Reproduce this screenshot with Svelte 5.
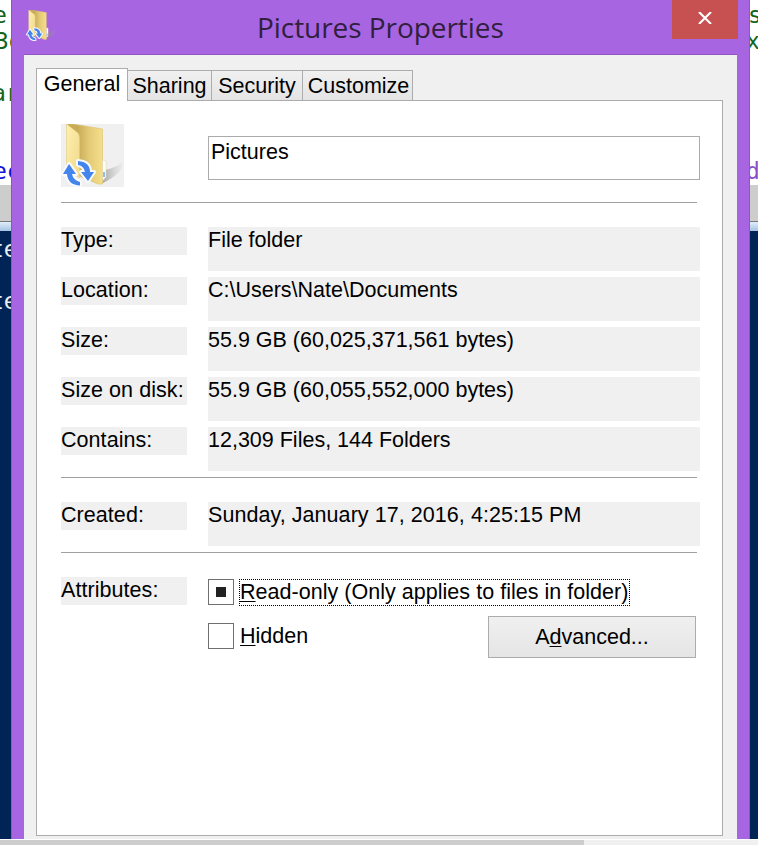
<script>
  const tabs = ['General', 'Sharing', 'Security', 'Customize'];
  const details = [
    ['Type:', 'File folder'],
    ['Location:', 'C:\\Users\\Nate\\Documents'],
    ['Size:', '55.9 GB (60,025,371,561 bytes)'],
    ['Size on disk:', '55.9 GB (60,055,552,000 bytes)'],
    ['Contains:', '12,309 Files, 144 Folders']
  ];
  const leftCode = [
    { text: 'e', shift: -7 }, { text: '3e', shift: -5 }, { text: '' },
    { text: 'ar', shift: -8 }, { text: '' }, { text: '' },
    { text: 'ec', shift: -7, tone: 'blue' }
  ];
  const rightCode = [
    { text: 's', shift: -2 }, { text: 'x', shift: -4 }, { text: '' }, { text: '' },
    { text: '' }, { text: '' }, { text: 'd', shift: -4, tone: 'violet' }
  ];
</script>

{#snippet folder(size)}
  <svg width={size} height={size} viewBox="0 0 63 63" aria-hidden="true">
    <defs>
      <linearGradient id="front" x1="0" y1="0" x2="1" y2="1">
        <stop offset="0" stop-color="#fff0ae" /><stop offset="1" stop-color="#f0d98a" />
      </linearGradient>
      <linearGradient id="back" x1="0" y1="0" x2="1" y2="0">
        <stop offset=".3" stop-color="#c8ab56" /><stop offset=".62" stop-color="#e4ca76" /><stop offset="1" stop-color="#f5df8b" />
      </linearGradient>
      <linearGradient id="shade" x1="0" y1="0" x2="1" y2="0">
        <stop offset="0" stop-color="#777" stop-opacity=".65" /><stop offset="1" stop-color="#aaa" stop-opacity=".05" />
      </linearGradient>
    </defs>
    <path d="M40 60 L44 46 Q54 44 62 38 L60 46 Q53 54 40 60Z" fill="url(#shade)" />
    <path d="M6 0 H12 L41.5 5 V60 L37 60 L18 52 V12Z" fill="url(#back)" stroke="#dbc06b" stroke-width=".6" />
    <path d="M41.5 36 L45 37 V53 L41.5 57Z" fill="#fff" stroke="#e3ce8d" stroke-width=".5" />
    <path d="M43 48 V53" stroke="#68a7ee" stroke-width="1.5" />
    <path d="M5.5 0 L17 9 Q18.5 11 18.5 14 V54 L5.5 45Z" fill="url(#front)" stroke="#e2cb7e" stroke-width=".6" />
    <g fill="#4385ed" stroke="#f8faff" stroke-width="4" stroke-linejoin="round" paint-order="stroke">
      <path d="M2 50 L8 40 L15 50 H11 Q12 56 19 58 L19 61.5 Q7 61 6 50Z" />
      <path d="M17 37 Q29 38 29 48 H33 L27 57 L20 48 H24 Q23 42 17 41Z" />
    </g>
  </svg>
{/snippet}

{#snippet code(lines)}
  {#each lines as line}
    <div class="line {line.tone ?? ''}" style:margin-left="{line.shift ?? 0}px">{line.text}</div>
  {/each}
{/snippet}

<div class="screen">
  <div class="backdrop">
    <div class="editor">
      <div class="edge left">{@render code(leftCode)}</div>
      <div class="edge right">{@render code(rightCode)}</div>
    </div>
    <div class="scroll"></div>
    <div class="splitter"></div>
    <div class="console"><div>te</div><div></div><div>te</div></div>
    <div class="bottom"><div class="thumb"></div></div>
  </div>

  <div class="window">
    <header>
      <div class="small-icon">{@render folder(31)}</div>
      <h1>Pictures Properties</h1>
      <button class="close" aria-label="Close">
        <svg width="14" height="12" viewBox="0 0 14 12"><path d="M1 0 L13 12 M13 0 L1 12" stroke="#fff" stroke-width="2.1" /></svg>
      </button>
    </header>
    <div class="client">
      <nav>
        {#each tabs as tab, i}
          <div class="tab t{i}" class:active={i === 0}>{tab}</div>
        {/each}
      </nav>
      <main>
        <div class="identity">
          <div class="picture">{@render folder(63)}</div>
          <div class="name">Pictures</div>
        </div>
        <hr />
        <div class="details">
          {#each details as [label, value]}
            <div class="row"><div class="label">{label}</div><div class="value">{value}</div></div>
          {/each}
        </div>
        <hr class="second" />
        <div class="row created"><div class="label">Created:</div><div class="value date">Sunday, January 17, 2016, 4:25:15 PM</div></div>
        <hr class="third" />
        <div class="attributes">
          <div class="label">Attributes:</div>
          <div class="options">
            <div class="check"><span class="box"><span class="mark"></span></span><span class="caption focus"><u>R</u>ead-only (Only applies to files in folder)</span></div>
            <div class="second-line">
              <div class="check"><span class="box"></span><span class="caption"><u>H</u>idden</span></div>
              <button class="advanced">A<u>d</u>vanced...</button>
            </div>
          </div>
        </div>
      </main>
    </div>
  </div>
</div>

<style>
  :global(body) { margin: 0; }
  .screen, .screen * { box-sizing: border-box; }
  .screen { position: relative; width: 758px; height: 845px; overflow: hidden; color: #000; font: 21.5px/26px "Liberation Sans", Arial, sans-serif; white-space: nowrap; }
  .backdrop { display: flex; flex-direction: column; height: 845px; }
  .editor { display: flex; justify-content: space-between; height: 185px; background: #fff; }
  .edge { height: 185px; padding-top: 2px; font: 23px/26px "DejaVu Sans Mono", monospace; color: #116619; }
  .left { width: 11px; }
  .right { width: 8px; }
  .line { height: 26px; }
  .blue { color: #1414e0; }
  .violet { color: #8a4fc8; }
  .scroll { height: 36px; background: #cdcdcd; }
  .splitter { height: 10px; border-top: 1px solid #777; background: linear-gradient(#dfeefb, #a5c3e3); }
  .console { flex: 1; padding-top: 5px; background: #012456; color: #eee; font: 23px/26px "DejaVu Sans Mono", monospace; }
  .console div { height: 26px; margin-left: -10px; }
  .bottom { height: 6px; border-top: 1px solid #fff; background: #f0f0f0; }
  .thumb { width: 584px; height: 5px; background: #cdcdcd; }
  .window { position: absolute; left: 11px; top: 0; width: 739px; height: 839px; padding: 0 11px 0 12px; background: #a865e2; border: solid #8f55c3; border-width: 0 1px; overflow: hidden; }
  header { display: flex; height: 54px; }
  .small-icon { width: 120px; padding: 10px 0 0 2px; }
  .small-icon svg { display: block; }
  h1 { flex: 1; margin: 0 0 0 8px; padding: 7px 0 0 105px; font: 28px/40px "Open Sans", "Noto Sans", sans-serif; letter-spacing: -.06px; color: #30203e; }
  .close { display: grid; place-items: center; width: 66px; height: 39px; padding: 0 0 4px; border: 0; background: #c75050; }
  .client { width: 713px; height: 785px; padding: 13px 14px 0 12px; background: #f0f0f0; border-top: 1px solid #8f55c3; }
  nav { position: relative; display: flex; align-items: flex-end; height: 33px; margin-bottom: -1px; }
  .tab { height: 31px; border: 1px solid #acacac; border-left: 0; background: linear-gradient(#f0f0f0, #e4e4e4); text-align: center; line-height: 30px; }
  .t0 { width: 92px; }
  .t1 { width: 84px; }
  .t2 { width: 91px; }
  .t3 { width: 110px; padding-left: 2px; }
  .active { height: 33px; border-left: 1px solid #acacac; border-bottom: 0; background: #fff; line-height: 30px; }
  main { width: 687px; height: 736px; padding: 23px 22px 0 24px; background: #fff; border: 1px solid #acacac; }
  .identity { display: flex; height: 78px; }
  .picture { width: 63px; height: 63px; background: #f0f0f0; }
  .picture svg { display: block; }
  .name { width: 492px; height: 44px; margin: 12px 0 0 84px; padding: 2px; border: 1px solid #ababab; }
  hr { width: 636px; height: 1px; margin: 0; border: 0; background: #a0a0a0; }
  .details { display: flex; flex-direction: column; gap: 6px; padding-top: 24px; }
  .row { display: flex; gap: 21px; height: 44px; }
  .label { width: 126px; height: 28px; background: #f0f0f0; letter-spacing: .06px; }
  .value { width: 492px; height: 44px; background: #f0f0f0; }
  .date { letter-spacing: .06px; }
  .second { margin-top: 6px; }
  .created { margin-top: 24px; }
  .third { margin-top: 6px; }
  .attributes { display: flex; gap: 21px; padding-top: 24px; }
  .options { padding-top: 1px; }
  .check { display: flex; align-items: center; height: 28px; gap: 5px; }
  .box { display: grid; place-items: center; width: 26px; height: 26px; border: 1px solid #707070; }
  .mark { width: 10px; height: 10px; background: #222; }
  .caption { height: 27px; padding: 0 1px; line-height: 26px; }
  .focus { width: 391px; border: 1px dotted #000; padding: 0; line-height: 24px; letter-spacing: .03px; }
  u { text-underline-offset: 2px; text-decoration-thickness: 1px; text-decoration-skip-ink: none; }
  .second-line { display: flex; justify-content: space-between; width: 488px; padding-top: 10px; }
  .second-line .check { margin-top: 6px; }
  .advanced { width: 208px; height: 42px; padding: 0; border: 1px solid #acacac; background: linear-gradient(#f0f0f0, #e5e5e5); color: #000; font: inherit; }
</style>
